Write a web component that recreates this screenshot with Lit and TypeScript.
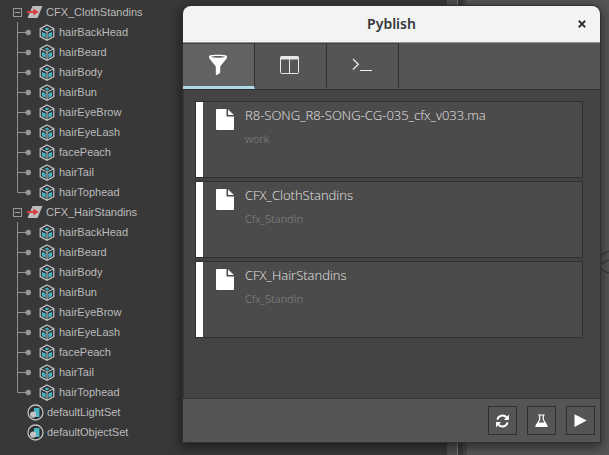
import { LitElement, html, css, svg } from "lit";
import { customElement, state } from "lit/decorators.js";

const MESHES = [
  "hairBackHead",
  "hairBeard",
  "hairBody",
  "hairBun",
  "hairEyeBrow",
  "hairEyeLash",
  "facePeach",
  "hairTail",
  "hairTophead",
];

const SETS = ["CFX_ClothStandins", "CFX_HairStandins"];
const DEFAULT_SETS = ["defaultLightSet", "defaultObjectSet"];

const INSTANCES = [
  { name: "R8-SONG_R8-SONG-CG-035_cfx_v033.ma", family: "work" },
  { name: "CFX_ClothStandins", family: "Cfx_StandIn" },
  { name: "CFX_HairStandins", family: "Cfx_StandIn" },
];

const setIcon = html`<svg width="16" height="14" viewBox="0 0 16 14" aria-hidden="true">
  <path d="M5.5 1H15.5L10.5 13H0.5Z" fill="#bdbdbd" />
  <path d="M0 6H6.4V3.6L11.6 7L6.4 10.4V8H0Z" fill="#dc3c3c" />
</svg>`;

const meshIcon = html`<svg width="16" height="17" viewBox="0 0 16 17" aria-hidden="true">
  <path d="M8 1L14.8 4.6V12.6L8 16.2L1.2 12.6V4.6Z" fill="#303637" stroke="#c4c8c8" stroke-width="1.2" />
  <path d="M8 3.6L10.4 5L8 6.4L5.6 5Z" fill="#46b4c2" />
  <path d="M3 8L6.6 9.6V13.8L3 12Z" fill="#46b4c2" />
  <path d="M13 8L9.4 9.6V13.8L13 12Z" fill="#46b4c2" />
  <path d="M1.2 4.8L8 8L14.8 4.8M8 8V16" fill="none" stroke="#c4c8c8" stroke-width="1" />
</svg>`;

const objectSetIcon = html`<svg width="17" height="17" viewBox="0 0 17 17" aria-hidden="true">
  <circle cx="8.5" cy="8.5" r="7.5" fill="#303030" stroke="#c0c0c0" stroke-width="1.3" />
  <path d="M7 4H12.4V13H8V8H7Z" fill="#46b4c2" />
  <circle cx="6.2" cy="10.6" r="3.1" fill="#c4c4c4" />
</svg>`;

const fileIcon = html`<svg width="18" height="21" viewBox="0 0 18 21" aria-hidden="true">
  <path d="M1 0H10.5V7.5H18V20A1 1 0 0 1 17 21H1A1 1 0 0 1 0 20V1A1 1 0 0 1 1 0Z" fill="#fff" />
  <path d="M12 0.2L17.8 6H12Z" fill="#fff" />
</svg>`;

const TABS = [
  {
    label: "Overview",
    icon: svg`<path fill-rule="evenodd" fill="#fff" d="M3 3.2C3 1.4 21 1.4 21 3.2C21 5 20.6 5.6 19.8 6.6L14.2 13.6V19.2C14.2 20.4 12 21.4 10.6 22C10.2 22.1 9.8 21.9 9.8 21.4V13.6L4.2 6.6C3.4 5.6 3 5 3 3.2ZM5 3.7C7 5 17 5 19 3.7C17 2.7 7 2.7 5 3.7Z"/>`,
  },
  {
    label: "Artist",
    icon: svg`<g fill="none" stroke="#e8e8e8"><rect x="2.5" y="3.5" width="18" height="17" rx="1"/><path d="M2.5 5H20.5" stroke-width="3"/><path d="M11.5 6V20.5"/></g>`,
  },
  {
    label: "Terminal",
    icon: svg`<g fill="none" stroke="#f0f0f0" stroke-width="1.2"><path d="M3 6L8.4 11.2L3 16.5"/><path d="M10 17.5H22"/></g>`,
  },
];

const ACTIONS = [
  {
    label: "Reset",
    icon: svg`<g fill="none" stroke="#fff" stroke-width="2"><path d="M2 6.6A5 4.6 0 0 1 11 4.4"/><path d="M12 9.4A5 4.6 0 0 1 3 11.6"/></g><path fill="#fff" d="M13.4 1.6V7H8.4ZM0.6 14.4V9H5.6Z"/>`,
  },
  {
    label: "Validate",
    icon: svg`<path fill="#fff" fill-rule="evenodd" d="M3.8 1.4H10.2V2.6H9.4V6.4L13 12.4C13.5 13.5 13.1 14 12 14H2C0.9 14 0.5 13.5 1 12.4L4.6 6.4V2.6H3.8ZM5.8 2.6V6.8L4.2 9.6H9.8L8.2 6.8V2.6Z"/>`,
  },
  {
    label: "Publish",
    icon: svg`<path fill="#fff" d="M1 1.2L13.2 7.6L1 14Z"/>`,
  },
];

@customElement("outliner-tree")
class OutlinerTree extends LitElement {
  static styles = css`
    :host {
      display: block;
      padding-top: 2px;
      font: 11px/20px "Liberation Sans", Arial, sans-serif;
      color: #bbb;
    }
    ul {
      list-style: none;
      margin: 0;
      padding: 0;
    }
    .row {
      display: flex;
      align-items: center;
      height: 20px;
      padding-left: 27px;
      gap: 3px;
    }
    .group {
      padding-left: 13px;
    }
    .toggle {
      width: 9px;
      height: 9px;
      margin-right: 2px;
      padding: 0;
      border: 1px solid #999;
      box-sizing: border-box;
      background: linear-gradient(#a8a8a8, #a8a8a8) center / 5px 1px no-repeat;
    }
    .leaf {
      padding-left: 17px;
      gap: 4px;
    }
    .branch {
      flex: none;
      width: 14px;
      height: 20px;
      margin-right: 4px;
    }
    svg {
      flex: none;
      display: block;
    }
  `;

  private leaf(name: string, last: boolean) {
    return html`<li class="row leaf">
      <svg class="branch" viewBox="0 0 14 20" aria-hidden="true">
        <path d=${last ? "M.5 0V10.5H10" : "M.5 0V20M.5 10.5H10"} fill="none" stroke="#909090" />
        <circle cx="11.3" cy="10.5" r="2.7" fill="#979797" />
      </svg>
      ${meshIcon}<span>${name}</span>
    </li>`;
  }

  render() {
    return html`<ul>
      ${SETS.map(
        (set) => html`<li>
          <div class="row group">
            <button class="toggle" aria-label="Collapse ${set}"></button>${setIcon}<span>${set}</span>
          </div>
          <ul>
            ${MESHES.map((m, i) => this.leaf(m, i === MESHES.length - 1))}
          </ul>
        </li>`
      )}
      ${DEFAULT_SETS.map((s) => html`<li class="row">${objectSetIcon}<span>${s}</span></li>`)}
    </ul>`;
  }
}

@customElement("pyblish-window")
class PyblishWindow extends LitElement {
  @state() private active = 0;

  static styles = css`
    :host {
      display: flex;
      flex-direction: column;
      overflow: hidden;
      border-radius: 8px 8px 0 0;
      background: #444;
      box-shadow: 0 0 0 1px #303030, 0 3px 12px 2px rgba(0, 0, 0, 0.5);
      font-family: "Open Sans", "Noto Sans", sans-serif;
    }
    button {
      padding: 0;
      border: 0;
      background: none;
    }
    svg {
      display: block;
    }
    header {
      display: grid;
      grid-template-columns: 36px 1fr 36px;
      align-items: center;
      height: 36px;
      background: #f3f3f3;
      border-bottom: 1px solid #909590;
    }
    h1 {
      grid-column: 2;
      margin: 0;
      text-align: center;
      font: 600 14px/20px "Noto Sans", sans-serif;
      color: #32373b;
    }
    .close {
      display: grid;
      place-items: center;
      height: 36px;
    }
    nav {
      display: flex;
      height: 46px;
      background: #555;
      border-bottom: 1px solid #303030;
    }
    .tab {
      display: grid;
      place-items: center;
      width: 72px;
      padding-right: 1px;
      box-sizing: border-box;
      border-right: 1px solid #303030;
      border-top: 1px solid #404040;
      border-bottom: 3px solid transparent;
      background-clip: padding-box;
    }
    .active {
      background-color: #626262;
      border-bottom-color: #add8e6;
    }
    main {
      flex: 1;
      display: flex;
      flex-direction: column;
      gap: 3px;
      padding: 11px 17px 12px 12px;
      border-left: 1px solid #363636;
    }
    article {
      display: flex;
      height: 75px;
      margin-left: -1px;
      border: 1px solid #303030;
      background: #4b4b4b;
    }
    .bar {
      width: 7px;
      margin-right: 13px;
      background: #fff;
    }
    .file {
      padding-top: 7px;
      margin-right: 11px;
    }
    h2 {
      margin: 3px 0 6px;
      font-size: 13px;
      line-height: 20px;
      font-weight: 300;
      color: #e4e4e4;
    }
    p {
      margin: 0;
      font-size: 11px;
      line-height: 16px;
      font-weight: 300;
      color: #888;
    }
    footer {
      display: flex;
      justify-content: flex-end;
      gap: 10px;
      padding: 7px 5px;
      background: #555;
      border-top: 1px solid #363636;
    }
    .action {
      display: grid;
      place-items: center;
      width: 29px;
      height: 29px;
      border: 1px solid #303030;
    }
  `;

  render() {
    return html`
      <header>
        <h1>Pyblish</h1>
        <button class="close" aria-label="Close">
          <svg width="8" height="8" viewBox="0 0 8 8"><path d="M.8 .8L7.2 7.2M7.2 .8L.8 7.2" stroke="#2e3436" stroke-width="2" /></svg>
        </button>
      </header>
      <nav>
        ${TABS.map(
          (t, i) => html`<button
            class="tab ${i === this.active ? "active" : ""}"
            aria-label=${t.label}
            @click=${() => (this.active = i)}
          >
            <svg width="24" height="24" viewBox="0 0 24 24">${t.icon}</svg>
          </button>`
        )}
      </nav>
      <main>
        ${INSTANCES.map(
          (it) => html`<article>
            <div class="bar"></div>
            <div class="file">${fileIcon}</div>
            <div>
              <h2>${it.name}</h2>
              <p>${it.family}</p>
            </div>
          </article>`
        )}
      </main>
      <footer>
        ${ACTIONS.map(
          (a) => html`<button class="action" aria-label=${a.label}>
            <svg width="15" height="15" viewBox="0 0 14 15">${a.icon}</svg>
          </button>`
        )}
      </footer>
    `;
  }
}

@customElement("app-root")
class AppRoot extends LitElement {
  static styles = css`
    :host {
      position: relative;
      display: grid;
      grid-template-columns: 1fr 20px 142px;
      min-height: 100vh;
      overflow: hidden;
      background: #383838;
    }
    .splitter {
      display: grid;
      grid-template-columns: 10px 1px 1fr 4px;
      background: #393939;
    }
    .grip {
      background: #4e4e4e;
    }
    .line {
      background: #777;
    }
    .edge {
      background: #474747;
    }
    .graph {
      display: flex;
      justify-content: flex-end;
      align-items: center;
      background: #565656;
    }
    .wires {
      display: block;
      margin-top: 70px;
    }
    pyblish-window {
      position: absolute;
      inset: 6px 9px 13px 183px;
    }
  `;

  render() {
    return html`
      <outliner-tree></outliner-tree>
      <div class="splitter">
        <div class="grip"></div>
        <div class="line"></div>
        <div></div>
        <div class="edge"></div>
      </div>
      <div class="graph">
        <svg class="wires" width="9" height="26" viewBox="0 0 9 26" aria-hidden="true">
          <path d="M0 4.5H3L9 1M0 14L9 10M0 17C2 20 5 22 9 23" fill="none" stroke="#303030" />
        </svg>
      </div>
      <pyblish-window></pyblish-window>
    `;
  }
}
